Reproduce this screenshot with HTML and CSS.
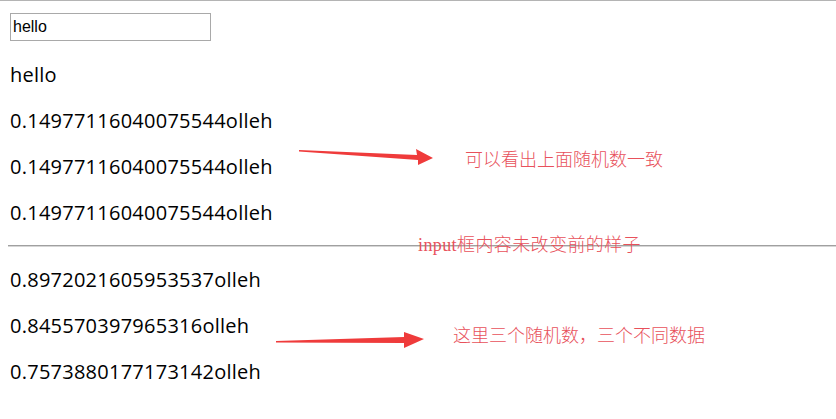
FILE: index.html
```html
<!DOCTYPE html>
<html>
<head>
  <meta charset="utf-8">
  <title>随机数</title>
  <link rel="stylesheet" href="styles.css">
</head>
<body>
  <div class="page">
    <div class="search">
      <input type="text" class="word-input" value="hello">
    </div>
    <p class="line">hello</p>
    <p class="line">0.14977116040075544olleh</p>
    <p class="line">0.14977116040075544olleh</p>
    <p class="line">0.14977116040075544olleh</p>
    <hr class="divider">
    <p class="line">0.8972021605953537olleh</p>
    <p class="line">0.845570397965316olleh</p>
    <p class="line">0.7573880177173142olleh</p>

    <!-- notes drawn over the page -->
    <svg class="arrow arrow-top" width="140" height="20" viewBox="0 0 140 20">
      <polygon points="0,1 118,6 117,0 134,9 119,16 119,11 0,2.5"></polygon>
    </svg>
    <span class="note note-top">可以看出上面随机数一致</span>
    <span class="note note-mid">input框内容未改变前的样子</span>
    <svg class="arrow arrow-bottom" width="150" height="20" viewBox="0 0 150 20">
      <polygon points="0,12 128,8 128,3 148,10 128,19 128,14 0,13.5"></polygon>
    </svg>
    <span class="note note-bottom">这里三个随机数，三个不同数据</span>
  </div>
</body>
</html>
```

FILE: styles.css
```css
body {
    margin: 0;
    background: #fff;
    color: #000;
    font-family: "Open Sans", "Noto Sans CJK SC", sans-serif;
}
.page {
    position: relative;
    border-top: 1px solid #b4b4b4;
    padding: 12px 0 20px 10px;
    min-height: 386px;
}
.search {
    padding-bottom: 2px;
}
.word-input {
    display: block;
    box-sizing: border-box;
    width: 201px;
    height: 28px;
    margin: 0;
    padding: 0 2px;
    border: 1px solid #a9a9a9;
    font-family: "Liberation Sans", Arial, sans-serif;
    font-size: 16px;
    color: #000;
    outline: none;
}
.line {
    margin: 18px 0;
    font-size: 20px;
    line-height: 28px;
    letter-spacing: 0.25px;
}
.divider {
    margin: 8px 0 19px -2px;
    border: none;
    border-top: 1px solid #a0a0a0;
    border-bottom: 1px solid #d6d6d6;
}
.arrow {
    position: absolute;
    fill: #ef3b3b;
}
.arrow-top {
    left: 299px;
    top: 148px;
}
.arrow-bottom {
    left: 276px;
    top: 328px;
}
.note {
    position: absolute;
    color: #e8515b;
    white-space: nowrap;
    font-family: "Noto Sans CJK SC", sans-serif;
    font-size: 18px;
    font-weight: 300;
    line-height: 20px;
}
.note-top {
    left: 465px;
    top: 147px;
}
.note-bottom {
    left: 453px;
    top: 323px;
}
.note-mid {
    left: 418px;
    top: 234px;
    font-family: "Liberation Serif", "Noto Sans CJK SC", serif;
    letter-spacing: 0.4px;
}
```
